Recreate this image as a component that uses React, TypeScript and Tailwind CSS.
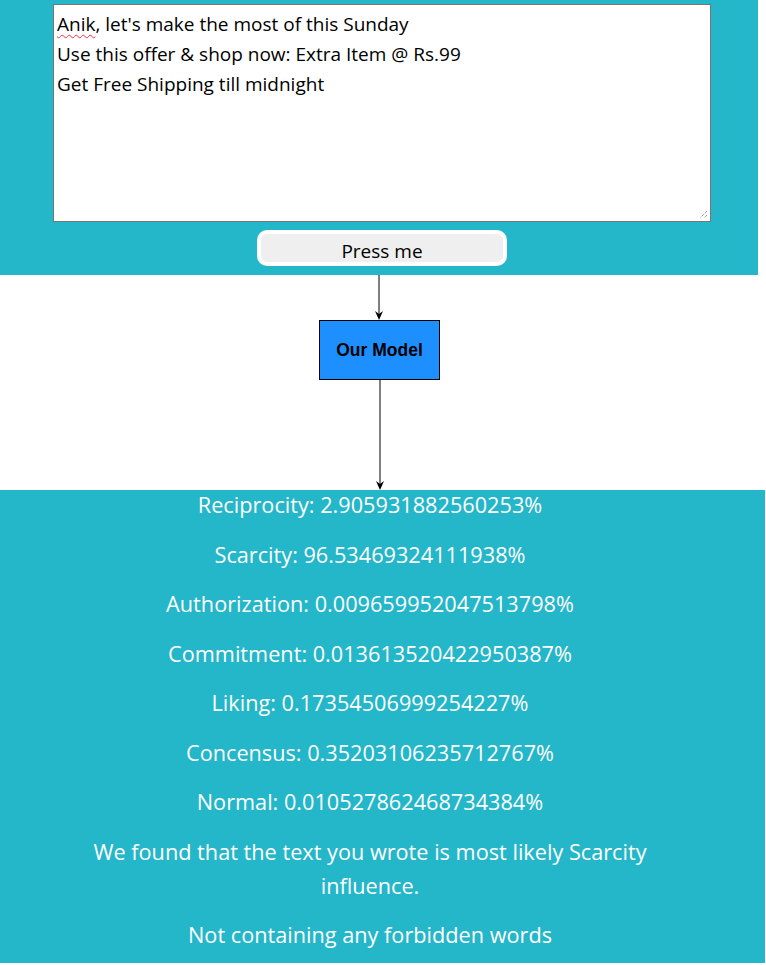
import React from "react";

const results = [
  "Reciprocity: 2.905931882560253%",
  "Scarcity: 96.53469324111938%",
  "Authorization: 0.009659952047513798%",
  "Commitment: 0.013613520422950387%",
  "Liking: 0.17354506999254227%",
  "Concensus: 0.35203106235712767%",
  "Normal: 0.010527862468734384%",
  "We found that the text you wrote is most likely Scarcity influence.",
  "Not containing any forbidden words",
];

function ArrowLine({ height }: { height: number }) {
  return (
    <svg width="12" height={height} viewBox={`0 0 12 ${height}`} className="block">
      <line x1="6" y1="0" x2="6" y2={height - 2} stroke="#000" strokeWidth="1" />
      <path d={`M2 ${height - 9} L6 ${height} L10 ${height - 9} L6 ${height - 6} Z`} fill="#000" />
    </svg>
  );
}

export default function App() {
  return (
    <div className="w-[766px] min-h-[965px] bg-white" style={{ fontFamily: '"Open Sans", "Noto Sans", sans-serif' }}>
      {/* input section */}
      <div className="w-[758px] h-[275px] bg-[#24b6c9] pt-[4px] flex flex-col items-start">
        <div className="relative ml-[53px] w-[658px] h-[218px] bg-white border border-[#767676] px-[3px] pt-[4px] text-[19px] leading-[30px] text-black">
          <div>
            <span className="underline decoration-wavy decoration-red-500 decoration-1 underline-offset-[3px]">Anik</span>
            , let's make the most of this Sunday
          </div>
          <div>Use this offer &amp; shop now: Extra Item @ Rs.99</div>
          <div>Get Free Shipping till midnight</div>
          <svg width="9" height="9" viewBox="0 0 9 9" className="absolute right-[2px] bottom-[2px]">
            <path d="M8 1 L1 8 M8 5 L5 8" stroke="#777" strokeWidth="1" strokeDasharray="1 1" />
          </svg>
        </div>
        <button className="mt-[8px] ml-[257px] w-[250px] h-[36px] rounded-[10px] border-[4px] border-white bg-[#efefef] text-[19px] leading-[28px] pt-[3px] text-black">
          Press me
        </button>
      </div>

      {/* model diagram */}
      <div className="w-[766px] h-[215px] flex flex-col items-start">
        <div className="ml-[373px]">
          <ArrowLine height={45} />
        </div>
        <div
          className="ml-[319px] w-[121px] h-[60px] bg-[#1e8fff] border border-black flex items-center justify-center text-[17.5px] font-bold text-black"
          style={{ fontFamily: '"Liberation Sans", Arial, sans-serif' }}
        >
          Our Model
        </div>
        <div className="ml-[374px]">
          <ArrowLine height={110} />
        </div>
      </div>

      {/* results */}
      <div className="w-[765px] h-[473px] bg-[#24b6c9] text-white flex flex-col">
        <div className="ml-[90px] w-[560px] flex flex-col items-center text-center text-[21.7px] leading-[34px] -mt-[2px]">
          {results.map((r) => (
            <p key={r} className="mb-[15.5px]">
              {r}
            </p>
          ))}
        </div>
      </div>
    </div>
  );
}
